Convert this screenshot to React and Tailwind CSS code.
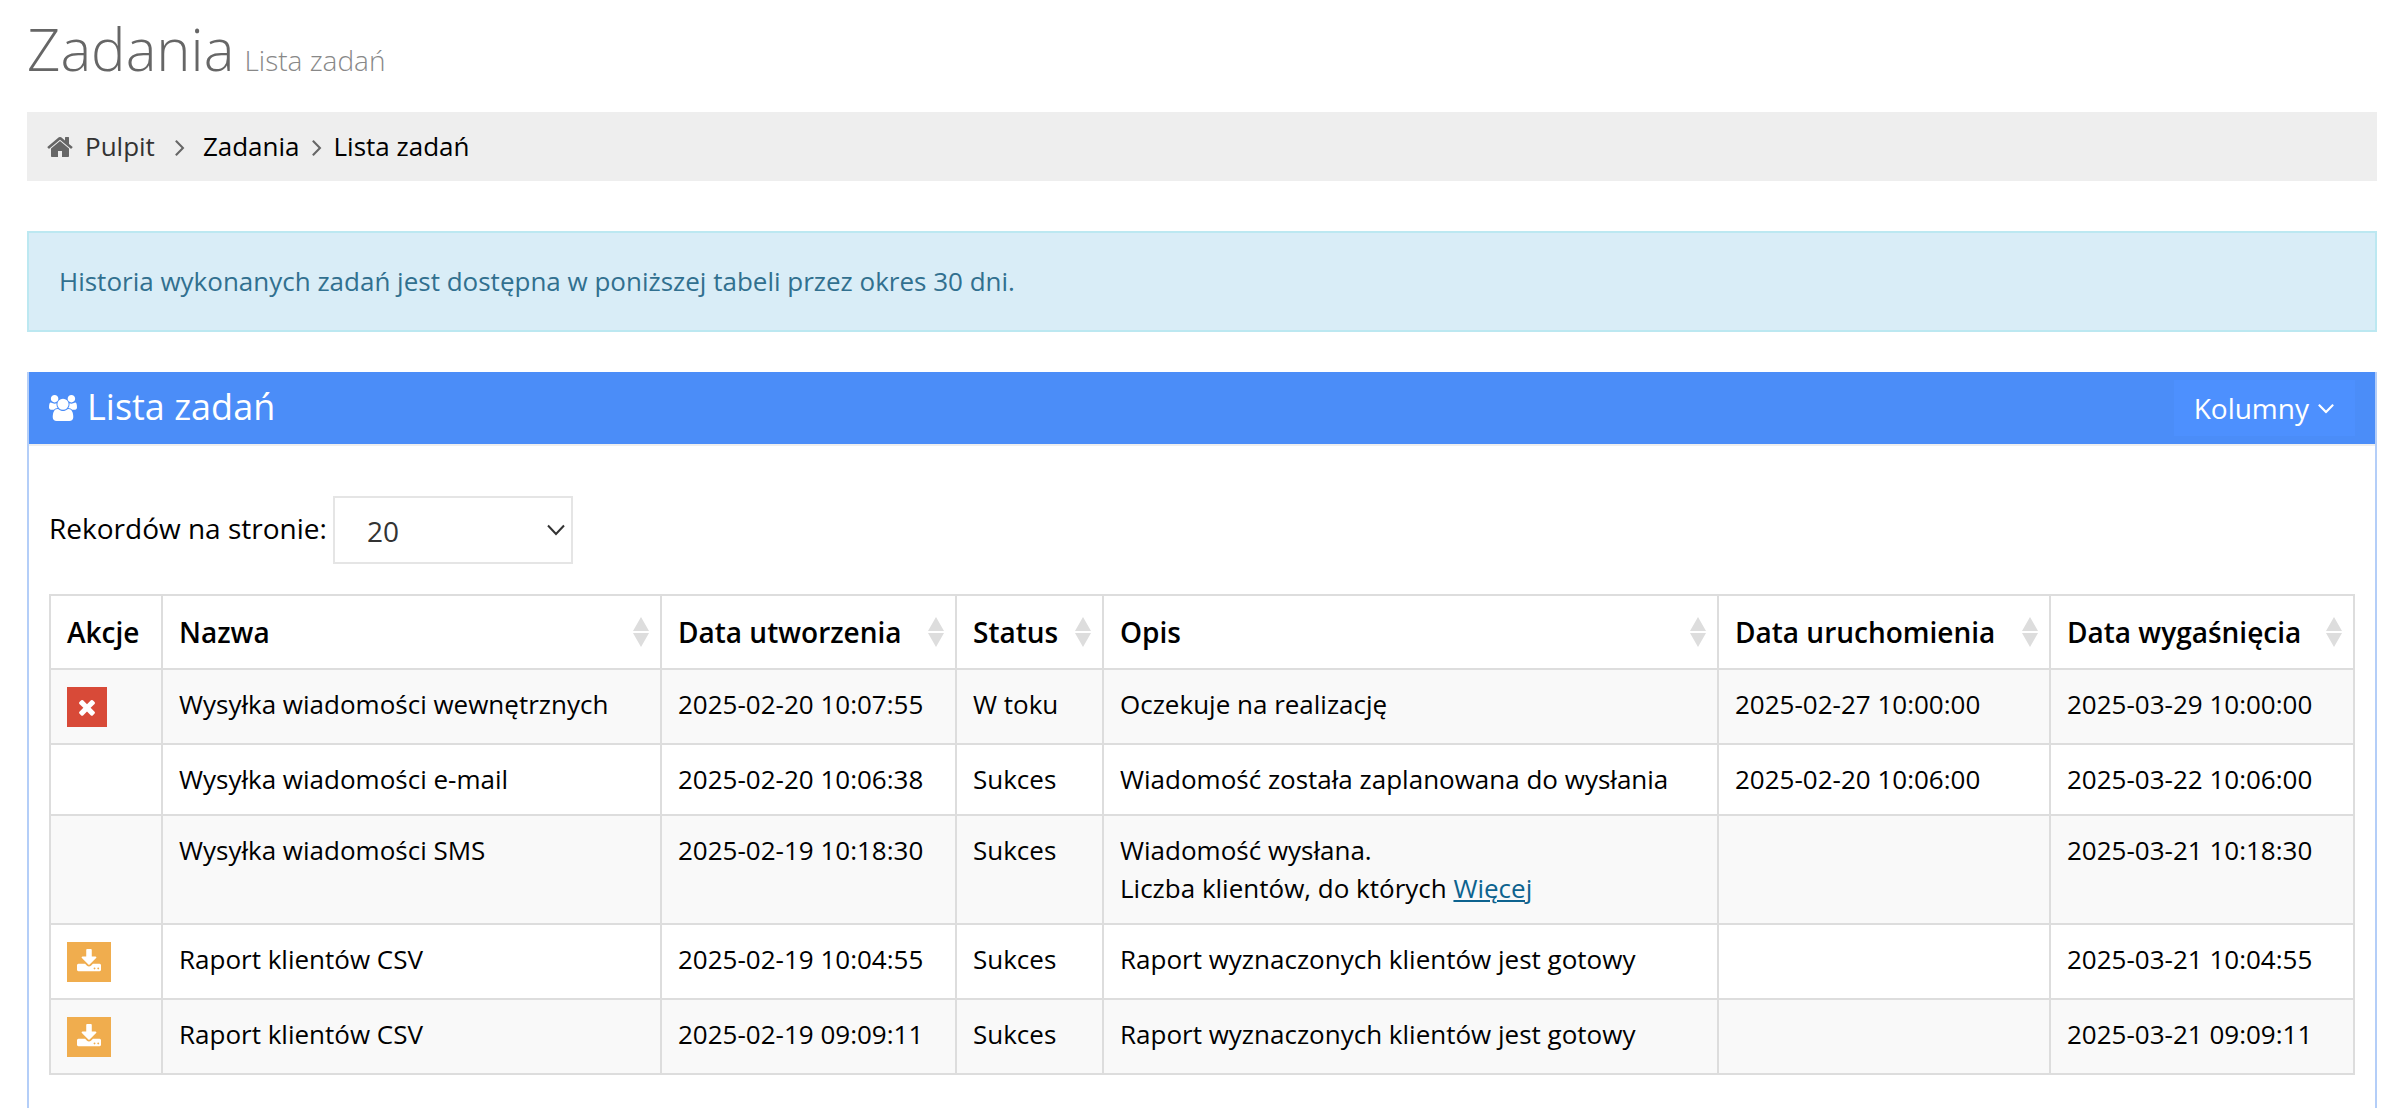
const SANS = "font-['Open_Sans',sans-serif]";

const fa = {
  home: {
    w: 1664,
    d: "M1408 544v-480q0 -26 -19 -45t-45 -19h-384v384h-256v-384h-384q-26 0 -45 19t-19 45v480q0 1 0.5 3t0.5 3l575 474l575 -474q1 -2 1 -6zM1631 613l-62 -74q-8 -9 -21 -11h-3q-13 0 -21 7l-692 577l-692 -577q-12 -8 -24 -7q-13 2 -21 11l-62 74q-8 10 -7 23.5t11 21.5l719 599q32 26 76 26t76 -26l244 -204v195q0 14 9 23t23 9h192q14 0 23 -9t9 -23v-408l219 -182q10 -8 11 -21.5t-7 -23.5z",
  },
  right: {
    w: 640,
    d: "M595 576q0 -13 -10 -23l-466 -466q-10 -10 -23 -10t-23 10l-50 50q-10 10 -10 23t10 23l393 393l-393 393q-10 10 -10 23t10 23l50 50q10 10 23 10t23 -10l466 -466q10 -10 10 -23z",
  },
  down: {
    w: 1152,
    d: "M1075 800q0 -13 -10 -23l-466 -466q-10 -10 -23 -10t-23 10l-466 466q-10 10 -10 23t10 23l50 50q10 10 23 10t23 -10l393 -393l393 393q10 10 23 10t23 -10l50 -50q10 -10 10 -23z",
  },
  times: {
    w: 1408,
    d: "M1298 214q0 -40 -28 -68l-136 -136q-28 -28 -68 -28t-68 28l-294 294l-294 -294q-28 -28 -68 -28t-68 28l-136 136q-28 28 -28 68t28 68l294 294l-294 294q-28 28 -28 68t28 68l136 136q28 28 68 28t68 -28l294 -294l294 294q28 28 68 28t68 -28l136 -136q28 -28 28 -68t-28 -68l-294 -294l294 -294q28 -28 28 -68z",
  },
  download: {
    w: 1664,
    d: "M1280 192q0 26 -19 45t-45 19t-45 -19t-19 -45t19 -45t45 -19t45 19t19 45zM1536 192q0 26 -19 45t-45 19t-45 -19t-19 -45t19 -45t45 -19t45 19t19 45zM1664 416v-320q0 -40 -28 -68t-68 -28h-1472q-40 0 -68 28t-28 68v320q0 40 28 68t68 28h465l135 -136q58 -56 136 -56t136 56l136 136h464q40 0 68 -28t28 -68zM1339 985q17 -41 -14 -70l-448 -448q-18 -19 -45 -19t-45 19l-448 448q-31 29 -14 70q17 39 59 39h256v448q0 26 19 45t45 19h256q26 0 45 -19t19 -45v-448h256q42 0 59 -39z",
  },
  group: {
    w: 1920,
    d: "M593 640q-162 -5 -265 -128h-134q-82 0 -138 40.5t-56 118.5q0 353 124 353q6 0 43.5 -21t97.5 -42.5t119 -21.5q67 0 133 23q-5 -37 -5 -66q0 -139 81 -256zM1664 3q0 -120 -73 -189.5t-194 -69.5h-874q-121 0 -194 69.5t-73 189.5q0 53 3.5 103.5t14 109t26.5 108.5t43 97.5t62 81t85.5 53.5t111.5 20q10 0 43 -21.5t73 -48t107 -48t135 -21.5t135 21.5t107 48t73 48t43 21.5q61 0 111.5 -20t85.5 -53.5t62 -81t43 -97.5t26.5 -108.5t14 -109t3.5 -103.5zM640 1280q0 -106 -75 -181t-181 -75t-181 75t-75 181t75 181t181 75t181 -75t75 -181zM1344 896q0 -159 -112.5 -271.5t-271.5 -112.5t-271.5 112.5t-112.5 271.5t112.5 271.5t271.5 112.5t271.5 -112.5t112.5 -271.5zM1920 671q0 -78 -56 -118.5t-138 -40.5h-134q-103 123 -265 128q81 117 81 256q0 29 -5 66q66 -23 133 -23q59 0 119 21.5t97.5 42.5t43.5 21q124 0 124 -353zM1792 1280q0 -106 -75 -181t-181 -75t-181 75t-75 181t75 181t181 75t181 -75t75 -181z",
  },
};

function Icon({ name, className }) {
  const { w, d } = fa[name];
  return (
    <svg viewBox={`0 0 ${w} 1792`} className={`shrink-0 fill-current ${className}`} aria-hidden="true">
      <path transform="translate(0 1536) scale(1 -1)" d={d} />
    </svg>
  );
}

function SortIcon() {
  return (
    <svg viewBox="0 0 18 30" className="h-[30px] w-[18px] shrink-0 fill-[#dddddd]" aria-hidden="true">
      <path d="M9 0 17 14H1zM9 30 17 16H1z" />
    </svg>
  );
}

const columns = [
  { label: "Nazwa", width: "w-[499px]" },
  { label: "Data utworzenia", width: "w-[295px]" },
  { label: "Status", width: "w-[147px]" },
  { label: "Opis", width: "w-auto" },
  { label: "Data uruchomienia", width: "w-[332px]" },
  { label: "Data wygaśnięcia", width: "w-[304px]" },
];

const rows = [
  { action: "cancel", name: "Wysyłka wiadomości wewnętrznych", created: "2025-02-20 10:07:55", status: "W toku", desc: "Oczekuje na realizację", started: "2025-02-27 10:00:00", expires: "2025-03-29 10:00:00" },
  { name: "Wysyłka wiadomości e-mail", created: "2025-02-20 10:06:38", status: "Sukces", desc: "Wiadomość została zaplanowana do wysłania", started: "2025-02-20 10:06:00", expires: "2025-03-22 10:06:00" },
  { name: "Wysyłka wiadomości SMS", created: "2025-02-19 10:18:30", status: "Sukces", desc: "Wiadomość wysłana.", more: "Liczba klientów, do których", started: "", expires: "2025-03-21 10:18:30" },
  { action: "download", name: "Raport klientów CSV", created: "2025-02-19 10:04:55", status: "Sukces", desc: "Raport wyznaczonych klientów jest gotowy", started: "", expires: "2025-03-21 10:04:55" },
  { action: "download", name: "Raport klientów CSV", created: "2025-02-19 09:09:11", status: "Sukces", desc: "Raport wyznaczonych klientów jest gotowy", started: "", expires: "2025-03-21 09:09:11" },
];

function ActionButton({ kind }) {
  if (kind === "cancel") {
    return (
      <button type="button" aria-label="Anuluj" className="flex h-10 w-10 items-center justify-center bg-[#d84a38] text-white">
        <Icon name="times" className="h-6 w-5" />
      </button>
    );
  }
  return (
    <button type="button" aria-label="Pobierz" className="flex h-10 w-11 items-center justify-center bg-[#f0ad4e] text-white">
      <Icon name="download" className="h-[26px] w-6" />
    </button>
  );
}

const cell = "border-2 border-[#dddddd] p-4 align-top";

export default function App() {
  return (
    <div className={`${SANS} min-h-screen bg-white px-[27px] text-[26px] leading-[37px] text-black`}>
      <h1 className="flex items-baseline gap-2.5 pt-2 text-[58px] leading-[82px] font-light text-[#666666]">
        Zadania <small className="text-[28px] leading-10 text-[#888888]">Lista zadań</small>
      </h1>

      <nav aria-label="Okruszki" className="mt-[22px] flex h-[69px] items-center bg-[#eeeeee] px-5">
        <Icon name="home" className="mr-3 h-7 w-[26px] text-[#666666]" />
        <a href="#pulpit" className="text-[#333333]">Pulpit</a>
        <Icon name="right" className="mr-[18px] ml-5 h-7 w-[10px] text-[#666666]" />
        <a href="#zadania">Zadania</a>
        <Icon name="right" className="mx-3 h-7 w-[10px] text-[#666666]" />
        <a href="#lista">Lista zadań</a>
      </nav>

      <div role="status" className="mt-[50px] border-2 border-[#bce8f1] bg-[#d9edf7] px-[30px] py-[30px] text-[#31708f]">
        Historia wykonanych zadań jest dostępna w poniższej tabeli przez okres 30 dni.
      </div>

      <section className="mt-10 min-h-[736px] border-x-2 border-[#b4cef8]">
        <header className="flex h-[74px] items-center border-b-2 border-[#eeeeee] bg-[#4b8df8] px-5 text-white">
          <Icon name="group" className="mr-2.5 h-8 w-7" />
          <h2 className="flex-1 pb-1 text-[36px]">Lista zadań</h2>
          <button type="button" className="flex h-14 items-center gap-2 bg-[#4d90fe] px-5 text-[28px]">
            Kolumny
            <Icon name="down" className="h-7 w-[18px]" />
          </button>
        </header>

        <div className="px-5 pt-[50px]">
          <div className="flex items-center gap-1.5 text-[28px]">
            <label htmlFor="page-size" className="pb-1">Rekordów na stronie:</label>
            <div className="relative">
              <select id="page-size" defaultValue="20" className="h-[68px] w-60 appearance-none border-2 border-[#e5e5e5] bg-white px-8 pt-0.5 text-[28px] text-[#333333]">
                <option>20</option>
                <option>50</option>
                <option>100</option>
              </select>
              <svg viewBox="0 0 18 12" className="pointer-events-none absolute top-[28px] right-2 h-3 w-[18px] fill-none stroke-[#333333] stroke-2" aria-hidden="true">
                <path d="M1 1.5 9 10 17 1.5" />
              </svg>
            </div>
          </div>

          <table className="mt-[30px] w-full table-fixed border-collapse">
            <thead>
              <tr className="text-left text-[28px] leading-10">
                <th scope="col" className={`${cell} w-[112px] font-semibold`}>Akcje</th>
                {columns.map((c) => (
                  <th key={c.label} scope="col" className={`${cell} ${c.width} font-semibold`}>
                    <div className="-mr-1.5 flex items-center justify-between whitespace-nowrap">
                      {c.label}
                      <SortIcon />
                    </div>
                  </th>
                ))}
              </tr>
            </thead>
            <tbody>
              {rows.map((r) => (
                <tr key={r.created} className="whitespace-nowrap odd:bg-[#f9f9f9]">
                  <td className="border-2 border-[#dddddd] px-4 pt-[17px] pb-4 align-top">
                    {r.action && <ActionButton kind={r.action} />}
                  </td>
                  <td className={cell}>{r.name}</td>
                  <td className={cell}>{r.created}</td>
                  <td className={cell}>{r.status}</td>
                  <td className={cell}>
                    {r.desc}
                    {r.more && (
                      <div className="pt-px">
                        {r.more} <a href="#wiecej" className="text-[#0d638f] underline">Więcej</a>
                      </div>
                    )}
                  </td>
                  <td className={cell}>{r.started}</td>
                  <td className={cell}>{r.expires}</td>
                </tr>
              ))}
            </tbody>
          </table>
        </div>
      </section>
    </div>
  );
}
